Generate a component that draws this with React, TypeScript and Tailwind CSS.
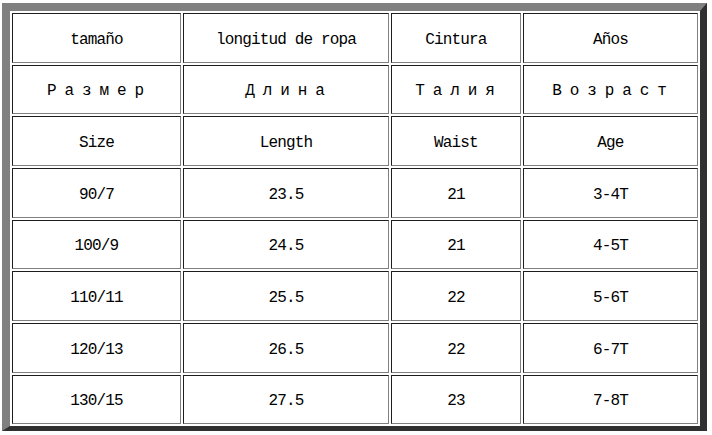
import React from "react";

const rows: string[][] = [
  ["tamaño", "longitud de ropa", "Cintura", "Años"],
  ["Размер", "Длина", "Талия", "Возраст"],
  ["Size", "Length", "Waist", "Age"],
  ["90/7", "23.5", "21", "3-4T"],
  ["100/9", "24.5", "21", "4-5T"],
  ["110/11", "25.5", "22", "5-6T"],
  ["120/13", "26.5", "22", "6-7T"],
  ["130/15", "27.5", "23", "7-8T"],
];

const heights = ["h-[50px]", "h-[49px]", "h-[50px]", "h-[50px]", "h-[49px]", "h-[50px]", "h-[50px]", "h-[49px]"];

export default function App() {
  return (
    <div className="w-[712px] h-[435px] bg-white pt-[3px] pl-[2px]">
      <table
        className="table-fixed border-separate border-spacing-[2px] bg-white border-solid border-t-8 border-l-8 border-r-[7px] border-b-[5px] border-t-[#808080] border-l-[#808080] border-r-[#303030] border-b-[#303030] w-[704px]"
        style={{ fontFamily: '"Liberation Mono", "DejaVu Sans Mono", monospace' }}
      >
        <colgroup>
          <col className="w-[169px]" />
          <col className="w-[206px]" />
          <col className="w-[130px]" />
          <col className="w-[175px]" />
        </colgroup>
        <tbody>
          {rows.map((r, i) => (
            <tr key={i} className={heights[i]}>
              {r.map((c, j) => (
                <td
                  key={j}
                  className={
                    "p-0 pt-[3px] text-center align-middle text-black border border-solid border-t-[#1e1e1e] border-l-[#1e1e1e] border-b-[#808080] border-r-[#808080] " +
                    (i === 1
                      ? "text-[16px] tracking-[7.9px] pl-[6px]"
                      : "text-[16px] tracking-[-0.85px]")
                  }
                >
                  {c}
                </td>
              ))}
            </tr>
          ))}
        </tbody>
      </table>
    </div>
  );
}
